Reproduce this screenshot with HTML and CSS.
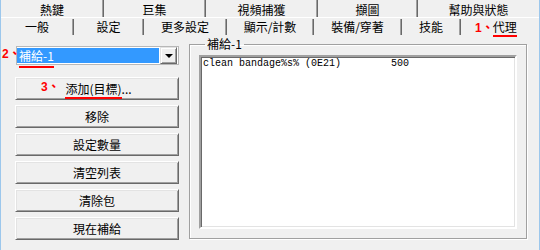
FILE: index.html
```html
<!DOCTYPE html>
<html lang="zh-Hant">
<head>
  <meta charset="UTF-8">
  <title>代理</title>
  <link rel="stylesheet" href="styles.css">
</head>
<body>
  <div class="window">
    <div class="tab-row row-back">
      <div class="tab w-103">熱鍵</div>
      <div class="tab w-102">巨集</div>
      <div class="tab w-112">視頻捕獲</div>
      <div class="tab w-100">擷圖</div>
      <div class="tab tab-last">幫助與狀態</div>
    </div>
    <div class="tab-row row-front">
      <div class="tab w-73">一般</div>
      <div class="tab w-70">設定</div>
      <div class="tab w-83">更多設定</div>
      <div class="tab w-87">顯示/計數</div>
      <div class="tab w-88">裝備/穿著</div>
      <div class="tab w-59">技能</div>
      <div class="tab tab-active"><span class="note-inline">1、</span><span class="marked">代理</span></div>
    </div>

    <div class="panel">
      <div class="side">
        <div class="combo">
          <span class="note note-2">2、</span>
          <div class="combo-value"><span class="marked">補給-1</span></div>
          <div class="combo-btn"><span class="arrow"></span></div>
        </div>
        <button class="btn btn-add"><span class="note note-3">3、</span><span class="marked">添加(目標)</span>...</button>
        <button class="btn">移除</button>
        <button class="btn">設定數量</button>
        <button class="btn">清空列表</button>
        <button class="btn">清除包</button>
        <button class="btn">現在補給</button>
      </div>

      <fieldset class="group">
        <legend>補給-1</legend>
        <div class="list">
          <div class="list-row"><span class="item-name">clean bandage%s% (0E21)</span><span>500</span></div>
        </div>
      </fieldset>
    </div>
  </div>
</body>
</html>
```

FILE: styles.css
```css
* {
  box-sizing: border-box;
}

body {
  margin: 0;
  background-color: #f0f0f0;
  font-family: "Noto Sans CJK TC", sans-serif;
  font-size: 12px;
  color: #000;
}

.window {
  width: 540px;
  height: 250px;
  border-left: 1px solid #9cc7ec;
  border-right: 1px solid #9cc7ec;
  overflow: hidden;
}

/* tabs */
.tab-row {
  display: flex;
}

.tab {
  text-align: center;
  white-space: nowrap;
  border-right: 1px solid #696969;
  box-shadow: inset -1px 0 #a0a0a0;
}

.row-back {
  height: 17px;
}

.row-back .tab {
  height: 17px;
  padding-top: 2px;
  line-height: 15px;
}

.row-front {
  height: 19px;
  border-top: 1px solid #fff;
  padding-top: 1px;
}

.row-front .tab {
  height: 16px;
  line-height: 16px;
}

.w-59 { width: 59px; }
.w-70 { width: 70px; }
.w-73 { width: 73px; }
.w-83 { width: 83px; }
.w-87 { width: 87px; }
.w-88 { width: 88px; }
.w-100 { width: 100px; }
.w-102 { width: 102px; }
.w-103 { width: 103px; }
.w-112 { width: 112px; }

.tab-last {
  flex: 1;
  border-right: none;
  box-shadow: none;
}

.row-front .tab-active {
  width: 66px;
  text-align: left;
  padding-left: 14px;
  border-right: none;
  box-shadow: none;
}

/* red annotations */
.note,
.note-inline {
  color: #f00;
  font-family: "Liberation Sans", "Noto Sans CJK TC", sans-serif;
  font-weight: bold;
  font-size: 12px;
}

.note-inline {
  margin-right: -1px;
}

.note {
  position: absolute;
  line-height: 12px;
}

.marked {
  position: relative;
}

.marked::after {
  content: "";
  position: absolute;
  left: 0;
  right: 0;
  bottom: -2px;
  height: 2px;
  background-color: #f00;
}

/* panel */
.panel {
  display: flex;
}

.side {
  width: 164px;
  margin-left: 14px;
  padding-top: 10px;
}

.combo {
  position: relative;
  display: flex;
  width: 163px;
  height: 19px;
  margin-left: 1px;
  background-color: #fff;
  border: 1px solid #b8b8b8;
}

.note-2 {
  left: -15px;
  top: 1px;
}

.combo-value {
  width: 142px;
  height: 15px;
  margin-top: 1px;
  padding-left: 2px;
  line-height: 15px;
  background-color: #3399ff;
  color: #fff;
}

.combo-value .marked::after {
  bottom: -4px;
}

.combo-btn {
  display: flex;
  align-items: center;
  justify-content: center;
  width: 17px;
  height: 17px;
  margin-left: 1px;
  background-color: #f0f0f0;
  border: 1px solid;
  border-color: #e3e3e3 #696969 #696969 #e3e3e3;
  box-shadow: inset 1px 1px #fff, inset -1px -1px #a0a0a0;
}

.arrow {
  width: 0;
  height: 0;
  border-left: 4px solid transparent;
  border-right: 4px solid transparent;
  border-top: 4px solid #000;
}

.btn {
  position: relative;
  display: block;
  width: 164px;
  height: 23px;
  margin: 5px 0 0;
  padding: 0;
  background-color: #f0f0f0;
  border: 1px solid;
  border-color: #fff #696969 #696969 #fff;
  box-shadow: inset 1px 1px #e3e3e3, inset -1px -1px #a0a0a0;
  font: inherit;
  line-height: 20px;
  color: #000;
}

.btn-add {
  margin-top: 12px;
  padding-left: 3px;
}

.note-3 {
  left: 25px;
  top: 3px;
}

/* group box */
.group {
  width: 338px;
  height: 202px;
  margin: 1px 0 0 10px;
  padding: 4px 8px 0 9px;
  border: 1px solid #a0a0a0;
  box-shadow: inset 1px 1px #fff, 1px 1px #fff;
}

.group legend {
  margin-left: 6px;
  padding: 0 2px;
  line-height: 14px;
}

.list {
  width: 318px;
  height: 174px;
  padding: 1px 2px;
  background-color: #fff;
  border: 2px solid;
  border-color: #a0a0a0 #fff #fff #a0a0a0;
  box-shadow: inset 1px 1px #696969, inset -1px -1px #e3e3e3;
  font-family: "Liberation Mono", monospace;
  font-size: 10px;
  line-height: 12px;
}

.list-row {
  display: flex;
  white-space: pre;
}

.item-name {
  width: 188px;
}
```
